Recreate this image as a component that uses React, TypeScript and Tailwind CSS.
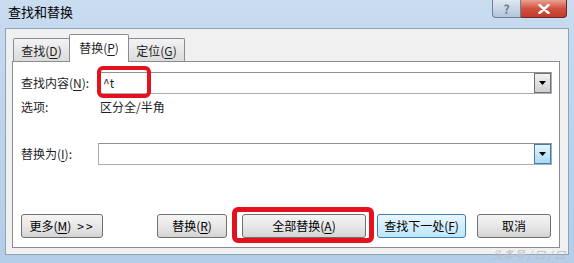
import React from "react";

const font = { fontFamily: '"Noto Sans CJK SC", "Microsoft YaHei", "Liberation Sans", sans-serif' };

function Key({ children }: { children: React.ReactNode }) {
  return <span className="underline underline-offset-2">{children}</span>;
}

function Arrow() {
  return (
    <svg width="7" height="4" viewBox="0 0 7 4" aria-hidden="true">
      <path d="M0 0h7L3.5 4z" fill="#000" />
    </svg>
  );
}

function Combo({ text, blue }: { text?: string; blue?: boolean }) {
  return (
    <div className="flex h-[22px] w-[454px] items-center border border-[#abadb3] border-t-[#8e9093] bg-white pl-[4px]">
      <span className="flex-1 text-[12px] leading-none">{text}</span>
      <div
        className={
          blue
            ? "flex h-[20px] w-[17px] items-center justify-center border border-[#3c7fb1] bg-gradient-to-b from-[#e8f5fc] to-[#a7d9f5]"
            : "flex h-[20px] w-[17px] items-center justify-center border border-[#707070] bg-gradient-to-b from-[#f2f2f2] to-[#cfcfcf]"
        }
      >
        <Arrow />
      </div>
    </div>
  );
}

function Btn({
  children,
  w,
  focused,
  className = "",
}: {
  children: React.ReactNode;
  w: string;
  focused?: boolean;
  className?: string;
}) {
  return (
    <div
      className={
        (focused
          ? "border-[#3c7fb1] bg-gradient-to-b from-[#eaf6fd] to-[#bee6fd] "
          : "border-[#707070] bg-gradient-to-b from-[#f4f4f4] via-[#e8e8e8] to-[#d4d4d4] ") +
        "flex h-[24px] items-center justify-center rounded-[3px] border text-[12px] text-black " +
        w +
        " " +
        className
      }
    >
      {children}
    </div>
  );
}

export default function App() {
  return (
    <div
      className="relative h-[263px] w-[574px] overflow-hidden bg-gradient-to-b from-[#c9dcf0] via-[#bcd3ec] to-[#b4cde8] text-[#1e1e1e]"
      style={font}
    >
      {/* title bar */}
      <div className="flex h-[28px] items-start justify-between">
        <span className="pl-[8px] pt-[5px] text-[13px] leading-none text-black">查找和替换</span>
        <div className="mr-[7px] flex h-[18px]">
          <div className="flex w-[29px] items-center justify-center rounded-bl-[4px] border border-t-0 border-[#6d7f98] bg-gradient-to-b from-[#dfe8f3] to-[#b3c4d8] text-[12px] font-bold leading-none text-[#6a7c94]">
            ?
          </div>
          <div className="flex w-[46px] items-center justify-center rounded-br-[4px] border border-l-0 border-t-0 border-[#6b2a24] bg-gradient-to-b from-[#e9a293] via-[#d0503f] to-[#c43a2b]">
            <svg width="12" height="10" viewBox="0 0 12 10" aria-hidden="true">
              <path d="M1.5 1l9 8M10.5 1l-9 8" stroke="#fff" strokeWidth="2.6" strokeLinecap="round" />
            </svg>
          </div>
        </div>
      </div>

      {/* client area */}
      <div className="mx-[5px] flex h-[227px] flex-col border border-[#8da2bb] bg-[#f0f0f0] pl-[6px] pr-[8px] pt-[5px]">
        {/* tabs */}
        <div className="flex h-[27px] items-end pl-[1px]">
          <div className="mb-[-1px] flex h-[24px] w-[57px] items-center justify-center rounded-t-[2px] border border-b-0 border-[#898c95] bg-gradient-to-b from-[#f3f3f3] to-[#dadada] text-[12px]">
            查找(<Key>D</Key>)
          </div>
          <div className="relative z-10 mb-[-1px] ml-[-1px] flex h-[28px] w-[60px] items-center justify-center rounded-t-[2px] border border-b-0 border-[#898c95] bg-white pb-[2px] text-[12px]">
            替换(<Key>P</Key>)
          </div>
          <div className="mb-[-1px] ml-[-1px] flex h-[24px] w-[57px] items-center justify-center rounded-t-[2px] border border-b-0 border-[#898c95] bg-gradient-to-b from-[#f3f3f3] to-[#dadada] text-[12px]">
            定位(<Key>G</Key>)
          </div>
        </div>

        {/* panel */}
        <div className="flex h-[187px] flex-col border border-[#898c95] bg-white pl-[8px] pt-[10px]">
          <div className="flex items-center">
            <span className="w-[77px] text-[12px]">
              查找内容(<Key>N</Key>):
            </span>
            <Combo text="^t" />
          </div>
          <div className="mt-[4px] flex h-[18px] items-center text-[12px]">
            <span className="w-[79px]">选项:</span>
            <span>区分全/半角</span>
          </div>
          <div className="mt-[27px] flex items-center">
            <span className="w-[77px] text-[12px]">
              替换为(<Key>I</Key>):
            </span>
            <Combo blue />
          </div>
          <div className="mt-[49px] flex">
            <Btn w="w-[82px]">
              <span>
                更多(<Key>M</Key>)
              </span>
              <span className="ml-[6px] tracking-[2px]">&gt;&gt;</span>
            </Btn>
            <Btn w="w-[70px]" className="ml-[54px]">
              <span>
                替换(<Key>R</Key>)
              </span>
            </Btn>
            <Btn w="w-[124px]" className="ml-[15px]">
              <span>
                全部替换(<Key>A</Key>)
              </span>
            </Btn>
            <Btn w="w-[89px]" focused className="ml-[11px]">
              <span>
                查找下一处(<Key>F</Key>)
              </span>
            </Btn>
            <Btn w="w-[74px]" className="ml-[11px]">
              <span>取消</span>
            </Btn>
          </div>
        </div>
      </div>

      {/* annotations */}
      <div className="absolute left-[97px] top-[66px] h-[32px] w-[54px] rounded-[6px] border-[4px] border-[#e3121c]" />
      <div className="absolute left-[232px] top-[207px] h-[36px] w-[142px] rounded-[6px] border-[5px] border-[#e3121c]" />

      {/* watermark */}
      <span className="absolute left-[492px] top-[249px] text-[11px] italic leading-none text-[#b9bec6]">
        头条号 / 口 / 口
      </span>
    </div>
  );
}
